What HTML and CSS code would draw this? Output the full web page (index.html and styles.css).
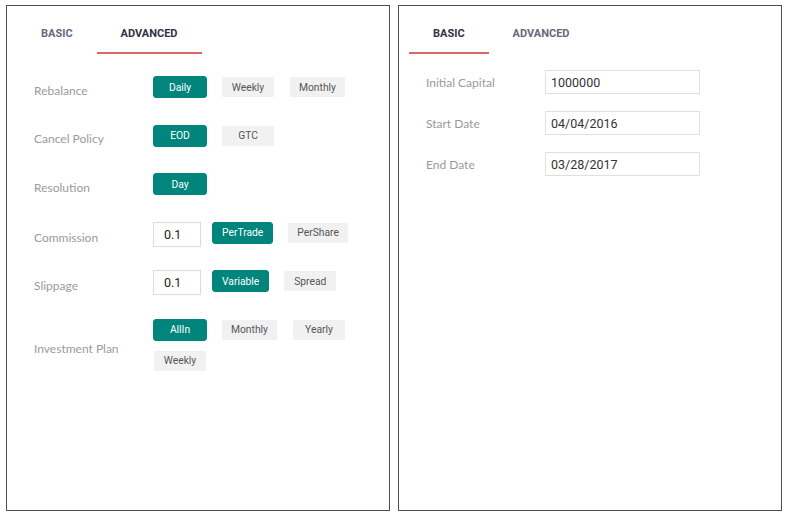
FILE: index.html
```html
<!DOCTYPE html>
<html>
<head>
<meta charset="utf-8">
<link rel="stylesheet" href="styles.css">
</head>
<body>
<div class="page">
  <section class="panel">
    <nav class="tabs">
      <div class="tab">BASIC</div>
      <div class="tab active">ADVANCED</div>
    </nav>
    <div class="form adv">
      <div class="row">
        <div class="row-inner">
          <div class="label">Rebalance</div>
          <div class="controls">
            <span class="btn on">Daily</span>
            <span class="btn">Weekly</span>
            <span class="btn">Monthly</span>
          </div>
        </div>
      </div>
      <div class="row">
        <div class="row-inner">
          <div class="label">Cancel Policy</div>
          <div class="controls">
            <span class="btn on">EOD</span>
            <span class="btn">GTC</span>
          </div>
        </div>
      </div>
      <div class="row">
        <div class="row-inner">
          <div class="label">Resolution</div>
          <div class="controls">
            <span class="btn on">Day</span>
          </div>
        </div>
      </div>
      <div class="row">
        <div class="row-inner">
          <div class="label">Commission</div>
          <div class="controls">
            <span class="num">0.1</span>
            <span class="btn on">PerTrade</span>
            <span class="btn">PerShare</span>
          </div>
        </div>
      </div>
      <div class="row">
        <div class="row-inner">
          <div class="label">Slippage</div>
          <div class="controls">
            <span class="num">0.1</span>
            <span class="btn on">Variable</span>
            <span class="btn">Spread</span>
          </div>
        </div>
      </div>
      <div class="row">
        <div class="row-inner">
          <div class="label">Investment Plan</div>
          <div class="controls">
            <span class="btn on">AllIn</span>
            <span class="btn">Monthly</span>
            <span class="btn">Yearly</span>
            <span class="btn">Weekly</span>
          </div>
        </div>
      </div>
    </div>
  </section>
  <section class="panel">
    <nav class="tabs">
      <div class="tab active">BASIC</div>
      <div class="tab">ADVANCED</div>
    </nav>
    <div class="form basic">
      <div class="brow">
        <div class="label">Initial Capital</div>
        <div class="field">1000000</div>
      </div>
      <div class="brow">
        <div class="label">Start Date</div>
        <div class="field">04/04/2016</div>
      </div>
      <div class="brow">
        <div class="label">End Date</div>
        <div class="field">03/28/2017</div>
      </div>
    </div>
  </section>
</div>
</body>
</html>
```

FILE: styles.css
```css
html, body {
  margin: 0;
  padding: 0;
  background: #fff;
}
body {
  font-family: Roboto, "Liberation Sans", sans-serif;
}
.page {
  display: flex;
  gap: 8px;
  padding: 5px 0 0 6px;
}
.panel {
  box-sizing: border-box;
  width: 384px;
  height: 506px;
  border: 1px solid #4e4e4e;
  padding: 7px 10px 0 10px;
}
.tabs {
  display: flex;
}
.tab {
  height: 37px;
  display: flex;
  align-items: center;
  padding: 2px 24px 0;
  font-size: 11px;
  font-weight: 700;
  color: #66697a;
  border-bottom: 2px solid transparent;
}
.tab.active {
  color: #2f3345;
  border-bottom-color: #dc6767;
}
.form {
  padding-left: 17px;
}
.adv {
  margin-top: 22px;
}
.row {
  min-height: 48.5px;
}
.row-inner {
  display: flex;
  align-items: center;
}
.label {
  width: 119px;
  flex: none;
  font-family: Lato, "Noto Sans", sans-serif;
  font-size: 12px;
  color: #9a9a9a;
}
.row .label {
  padding-top: 6px;
}
.controls {
  display: flex;
  flex-wrap: wrap;
  align-items: flex-start;
  column-gap: 14px;
  row-gap: 9px;
  width: 220px;
}
.btn {
  box-sizing: border-box;
  height: 22px;
  min-width: 54px;
  padding: 0 9px;
  display: inline-flex;
  align-items: center;
  justify-content: center;
  font-size: 10.3px;
  color: #555;
  background: #f1f1f1;
  border: 1px solid #fff;
  border-radius: 2px;
}
.btn.on {
  background: #00857d;
  border-color: #00857d;
  color: #fff;
  border-radius: 3px;
}
.num {
  box-sizing: border-box;
  width: 48px;
  height: 25px;
  border: 1px solid #dcdcdc;
  padding-left: 10px;
  display: flex;
  align-items: center;
  font-size: 12.5px;
  color: #222;
  margin-right: -3px;
}
.basic {
  margin-top: 16px;
}
.brow {
  display: flex;
  align-items: center;
  margin-bottom: 17px;
}
.field {
  box-sizing: border-box;
  width: 155px;
  height: 24px;
  border: 1px solid #e0e0e0;
  padding-left: 5px;
  display: flex;
  align-items: center;
  font-size: 12.5px;
  color: #333;
}
```
